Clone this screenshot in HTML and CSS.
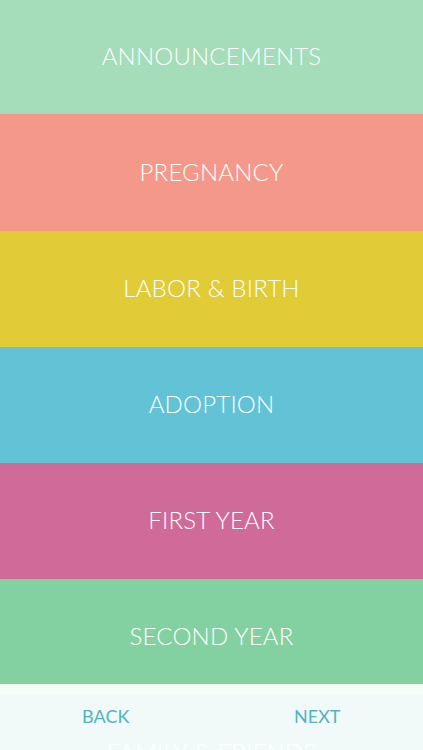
FILE: index.html
```html
<!DOCTYPE html>
<html>
<head>
<meta charset="utf-8">
<link rel="stylesheet" href="styles.css">
</head>
<body>
<div class="screen">
  <div class="list">
    <div class="band band-first c1">ANNOUNCEMENTS</div>
    <div class="band band-second c2">PREGNANCY</div>
    <div class="band c3">LABOR &amp; BIRTH</div>
    <div class="band c4">ADOPTION</div>
    <div class="band c5">FIRST YEAR</div>
    <div class="band c6">SECOND YEAR</div>
    <div class="band c7">FAMILY &amp; FRIENDS</div>
  </div>
  <div class="bar">
    <div class="bar-btn">BACK</div>
    <div class="bar-btn">NEXT</div>
  </div>
</div>
</body>
</html>
```
FILE: styles.css
```css
html, body {
  margin: 0;
  padding: 0;
}
body {
  width: 423px;
  height: 750px;
  overflow: hidden;
  font-family: "Lato", "Open Sans", sans-serif;
}
.screen {
  position: relative;
  width: 423px;
  height: 750px;
  overflow: hidden;
}
.list {
  display: flex;
  flex-direction: column;
}
.band {
  height: 116px;
  box-sizing: border-box;
  padding-bottom: 3px;
  flex: none;
  display: flex;
  align-items: center;
  justify-content: center;
  color: #ffffff;
  font-size: 24px;
  font-weight: 300;
  letter-spacing: 0.2px;
}
.band-first { height: 114px; }
.band-second { height: 117px; }
.c1 { background: #a5dcba; }
.c2 { background: #f4998a; }
.c3 { background: #e1cb37; }
.c4 { background: #62c3d6; }
.c5 { background: #d06a99; }
.c6 { background: #83d1a1; }
.c7 { background: #45b7a9; }
.bar {
  position: absolute;
  left: 0;
  right: 0;
  bottom: 0;
  height: 66px;
  background: rgba(255, 255, 255, 0.93);
  display: grid;
  grid-template-columns: 1fr 1fr;
  align-items: center;
}
.bar-btn {
  text-align: center;
  color: #52b3c3;
  font-size: 18px;
  font-weight: 400;
  padding-bottom: 2px;
}
```
